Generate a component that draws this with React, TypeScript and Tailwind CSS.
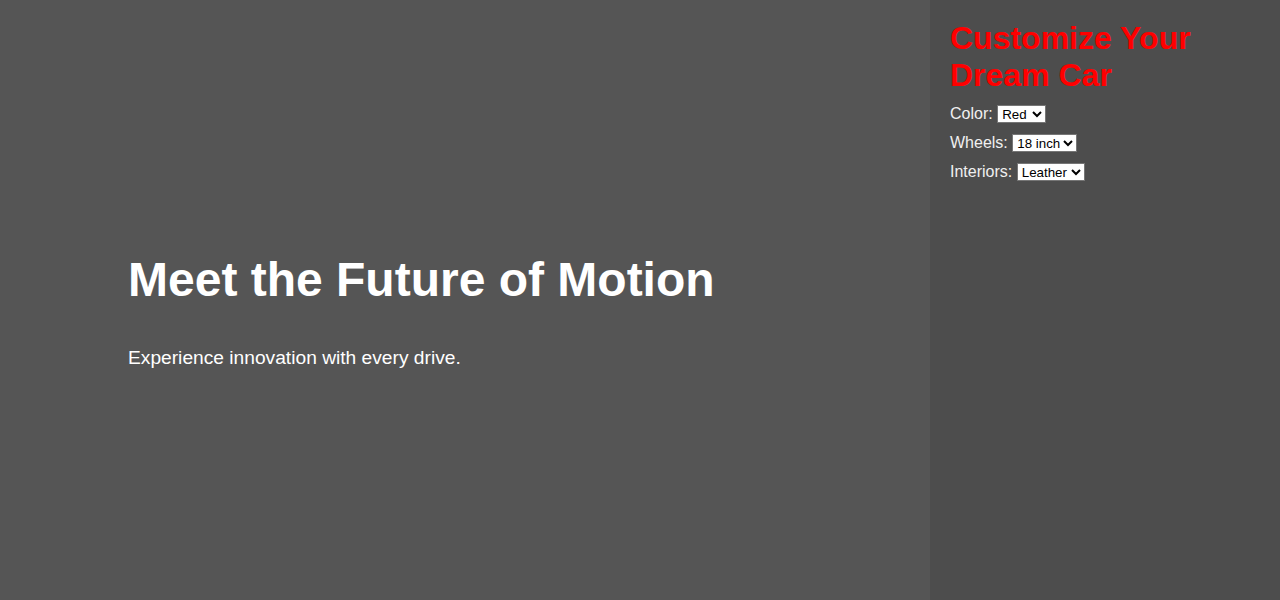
import React from "react";

const selectCls =
  "bg-white text-black border border-[#767676] rounded-none text-[13.333px] font-['Liberation_Sans',Arial,sans-serif] h-[18px] align-middle";

export default function App() {
  return (
    <div className="flex h-[600px] w-[1280px] font-['Liberation_Sans',Arial,sans-serif] text-white">
      <section className="flex w-[930px] flex-col justify-center bg-[#555555] px-[128px] pt-[20px]">
        <h1 className="m-0 text-[48px] font-bold leading-[55px]">Meet the Future of Motion</h1>
        <p className="mt-[40px] text-[19.2px] leading-[22px]">Experience innovation with every drive.</p>
      </section>
      <aside className="w-[350px] bg-[#4d4d4d] p-[20px]">
        <h2 className="m-0 text-[32px] font-bold leading-[37px] text-[#ff0000]">Customize Your Dream Car</h2>
        <div className="mt-[10px] flex flex-col gap-[10px] text-[16px] text-[#f0f0f0]">
          <div className="flex items-center gap-[4.5px] h-[19px]">
            <label>Color:</label>
            <select className={selectCls} defaultValue="Red">
              <option>Red</option>
              <option>Blue</option>
            </select>
          </div>
          <div className="flex items-center gap-[4.5px] h-[19px]">
            <label>Wheels:</label>
            <select className={selectCls} defaultValue="18 inch">
              <option>18 inch</option>
              <option>19 inch</option>
              <option>20 inch</option>
            </select>
          </div>
          <div className="flex items-center gap-[4.5px] h-[19px]">
            <label>Interiors:</label>
            <select className={selectCls} defaultValue="Leather">
              <option>Leather</option>
              <option>Fabric</option>
            </select>
          </div>
        </div>
      </aside>
    </div>
  );
}
